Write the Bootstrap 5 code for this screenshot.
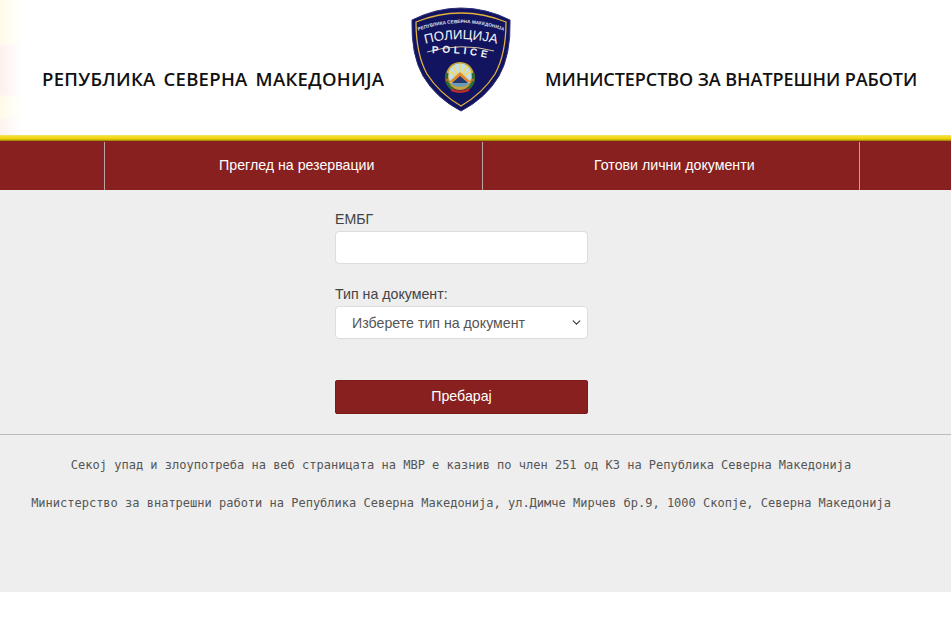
<!DOCTYPE html>
<html lang="mk">
<head>
    <meta charset="UTF-8">
    <title>Преглед на резервации</title>
    <link href="https://cdn.jsdelivr.net/npm/bootstrap@5.3.3/dist/css/bootstrap.min.css" rel="stylesheet">
    <style>
    body {
      font-family: "Liberation Sans", Arial, sans-serif;
      background: #fff;
    }
    .top-head {
      height: 135px;
      background:
        linear-gradient(to right, rgba(255, 255, 255, 0), #fff 22px) no-repeat left top / 24px 135px,
        linear-gradient(to bottom, #fffbe9 0 44px, #fdf1ef 46px 94px, #fffbe8 98px 116px, #fdf3f0 120px) no-repeat left top / 24px 135px,
        #fff;
    }
    .gold-band {
      height: 6px;
      background: linear-gradient(to bottom, #f3e36a 0, #f5dc20 2px, #eed000 4px, #8a7a10 6px);
    }
    .head-title {
      font-family: "Open Sans", "Noto Sans", sans-serif;
      font-weight: 600;
      font-size: 18px;
      color: #111;
      white-space: pre;
      margin-top: 66px;
      line-height: 26px;
    }
    .head-left { width: 342px; margin-left: 42px; font-size: 18.5px; letter-spacing: .3px; word-spacing: 2.8px; }
    .head-logo { width: 100px; height: 112px; margin-left: 27px; margin-top: 5px; }
    .head-right { margin-left: 34px; letter-spacing: -.06px; }
    .top-menu {
      height: 49px;
      background: #87201f;
      padding-left: 104px;
    }
    .top-menu a {
      width: 378px;
      margin-top: 1px;
      padding-left: 7px;
      border-left: 1px solid #b9a5a5;
      color: #fff;
      font-size: 14.2px;
      text-decoration: none;
    }
    .top-menu a:last-child { width: 92px; }
    .main-area { background: #eee; height: 402px; padding-top: 19px; }
    .search-box { width: 253px; margin-left: 335px; }
    .search-box label { font-size: 14.2px; color: #444; margin-bottom: 2px; line-height: 20px; display: block; }
    .search-box .form-control, .search-box .form-select {
      height: 33px;
      border: 1px solid #ddd;
      border-radius: 4px;
      font-size: 14.2px;
      color: #555;
      padding-left: 16px;
    }
    .search-box .form-select {
      background-size: 11px 9px;
      background-position: right 5px center;
    }
    .box-gap { margin-top: 20px; }
    .btn-search {
      display: block;
      width: 100%;
      height: 34px;
      margin-top: 41px;
      background: #87201f;
      border: 1px solid #7a1c1b;
      border-radius: 2px;
      color: #fff;
      font-size: 14.2px;
    }
    .line-sep { border-top: 1px solid #bbb; margin-top: 20px; }
    .foot-txt {
      font-family: "DejaVu Sans Mono", "Liberation Mono", monospace;
      font-size: 12px;
      color: #555;
      text-align: center;
      line-height: 16px;
      white-space: pre;
      padding-right: 29px;
    }
    .foot-one { margin-top: 22px; }
    .foot-two { margin-top: 22px; }
    </style>
</head>
<body>

  <header class="top-head d-flex align-items-start">
    <div class="head-title head-left">РЕПУБЛИКА СЕВЕРНА МАКЕДОНИЈА</div>
    <svg class="head-logo flex-shrink-0" viewBox="0 0 100 112" role="img" aria-label="Полиција">
      <defs>
        <path id="arcTop" d="M4 27 Q50 9 96 27"/>
        <path id="arcMid" d="M4 42 Q50 26 96 42"/>
        <path id="arcLow" d="M12 49 Q50 45 88 56"/>
      </defs>
      <path d="M1 15 Q25 3 50 3 Q75 3 99 15 Q100 50 88 71 Q75 93 50 106 Q25 93 12 71 Q0 50 1 15 Z" fill="#12145f" stroke="#2b2d7a" stroke-width="1"/>
      <path d="M5 17 Q27 8 50 8 Q73 8 95 17 Q95 49 84 69 Q72 88 50 101 Q28 88 16 69 Q5 49 5 17 Z" fill="none" stroke="#e0b23a" stroke-width="1.3"/>
      <text font-family="Liberation Sans, sans-serif" font-size="4.7" font-weight="700" fill="#dfe0ea" text-anchor="middle"><textPath href="#arcTop" startOffset="50%">РЕПУБЛИКА СЕВЕРНА МАКЕДОНИЈА</textPath></text>
      <text font-family="Liberation Sans, sans-serif" font-size="13.2" fill="#f2f2f6" text-anchor="middle"><textPath href="#arcMid" startOffset="50%">ПОЛИЦИЈА</textPath></text>
      <path d="M16 47 Q50 37 83 46" fill="none" stroke="#d8c8a0" stroke-width="1"/>
      <text font-family="Liberation Sans, sans-serif" font-size="10" font-weight="700" letter-spacing="3.6" fill="#f2f2f6" text-anchor="middle"><textPath href="#arcLow" startOffset="50%">POLICE</textPath></text>
      <circle cx="49" cy="71" r="14" fill="#caa23a"/>
      <circle cx="49" cy="70" r="11.5" fill="#bfe0ea"/>
      <path d="M49 74 L42 61 M49 74 L49 59 M49 74 L56 61 M49 74 L38 66 M49 74 L60 66" stroke="#f3d860" stroke-width="1.8"/>
      <path d="M38 77 L49 67 L60 77 Z" fill="#e0892e"/>
      <path d="M41 78 L49 71 L57 78 Z" fill="#27386f"/>
      <path d="M39 78 H59 Q55 82 49 82 Q43 82 39 78 Z" fill="#6b9bb5"/>
      <path d="M36 68 Q33 79 43 85" fill="none" stroke="#2f6a35" stroke-width="3"/>
      <path d="M62 68 Q65 79 55 85" fill="none" stroke="#2f6a35" stroke-width="3"/>
      <circle cx="36" cy="75" r="1.2" fill="#d8632a"/>
      <circle cx="62" cy="75" r="1.2" fill="#d8632a"/>
      <path d="M40 83 Q49 88 58 83 L58 86 Q49 90 40 86 Z" fill="#b8302a"/>
    </svg>
    <div class="head-title head-right">МИНИСТЕРСТВО ЗА ВНАТРЕШНИ РАБОТИ</div>
  </header>
  <div class="gold-band"></div>

  <nav class="top-menu d-flex">
    <a href="#" class="d-flex align-items-center justify-content-center">Преглед на резервации</a>
    <a href="#" class="d-flex align-items-center justify-content-center">Готови лични документи</a>
    <a href="#" class="d-flex align-items-center justify-content-center"></a>
  </nav>

  <main class="main-area">
    <form class="search-box">
      <label for="embg">ЕМБГ</label>
      <input type="text" class="form-control" id="embg">
      <div class="box-gap">
        <label for="tip">Тип на документ:</label>
        <select class="form-select" id="tip">
          <option>Изберете тип на документ</option>
        </select>
      </div>
      <button type="button" class="btn-search">Пребарај</button>
    </form>
    <div class="line-sep"></div>
    <p class="foot-txt foot-one mb-0">Секој упад и злоупотреба на веб страницата на МВР е казнив по член 251 од КЗ на Република Северна Македонија</p>
    <p class="foot-txt foot-two mb-0">Министерство за внатрешни работи на Република Северна Македонија, ул.Димче Мирчев бр.9, 1000 Скопје, Северна Македонија</p>
  </main>

  <script src="https://cdn.jsdelivr.net/npm/bootstrap@5.3.3/dist/js/bootstrap.bundle.min.js"></script>
</body>
</html>
